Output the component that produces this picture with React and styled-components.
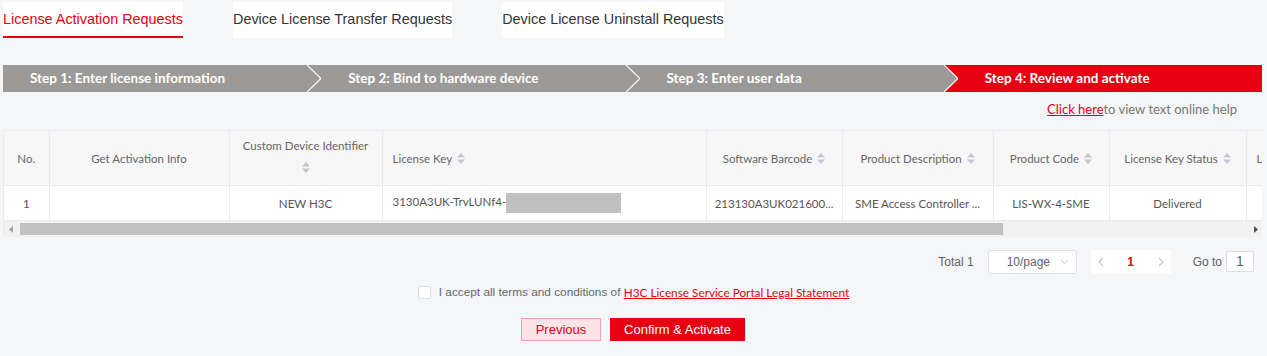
import React from 'react';
import styled, { createGlobalStyle } from 'styled-components';

const color = {
	red: '#e60012',
	page: '#f5f6f8',
	stepGrey: '#9b9a98',
	line: '#e9ebf2',
	head: '#f7f7f8',
	text: '#555',
	sub: '#666',
	sort: '#c4c7cd',
};

const GlobalStyle = createGlobalStyle`
	html, body {
		margin: 0;
		background: ${color.page};
		font-family: "Liberation Sans", Arial, sans-serif;
	}
`;

const Page = styled.div`
	width: 1267px;
	height: 356px;
	box-sizing: border-box;
	padding: 2px 5px 0 3px;
	overflow: hidden;
`;

const Tabs = styled.div`
	display: flex;
	gap: 50px;
	height: 36px;
`;

const Tab = styled.div`
	background: #fff;
	height: 34px;
	line-height: 34px;
	font-size: 14.4px;
	color: ${p => (p.$active ? color.red : '#333')};
	border-bottom: 2px solid ${p => (p.$active ? color.red : 'transparent')};
	white-space: nowrap;
`;

const Steps = styled.div`
	display: flex;
	height: 27px;
	margin-top: 27px;
`;

const Step = styled.div`
	flex: 1;
	background: ${p => (p.$active ? color.red : color.stepGrey)};
	color: #fff;
	font-family: Lato, "Noto Sans", sans-serif;
	font-weight: 700;
	font-size: 13.5px;
	line-height: 27px;
	padding-left: 27px;
	white-space: nowrap;
`;

const Sep = styled.svg`
	flex: none;
	display: block;
	background: ${p => p.$next};
`;

const Chevron = ({ prev, next }) => (
	<Sep width="14" height="27" viewBox="0 0 14 27" $next={next}>
		<polygon points="0,0 14,13.5 0,27" fill={prev} />
		<polyline points="0,0 14,13.5 0,27" fill="none" stroke="#fff" strokeWidth="1.2" />
	</Sep>
);

const Help = styled.div`
	text-align: right;
	padding-right: 25px;
	margin-top: 9px;
	font-family: Lato, "Noto Sans", sans-serif;
	font-size: 13px;
	color: #777;
	line-height: 16px;
	a {
		color: ${color.red};
		text-decoration: underline;
	}
`;

const TableWrap = styled.div`
	margin-top: 13px;
	width: 1259px;
	overflow: hidden;
	border-top: 1px solid ${color.line};
	border-left: 1px solid ${color.line};
	box-sizing: border-box;
	font-family: Lato, "Noto Sans", sans-serif;
	font-size: 11.5px;
`;

const Table = styled.table`
	border-collapse: collapse;
	table-layout: fixed;
	width: 1400px;
`;

const Th = styled.th`
	height: 54px;
	background: ${color.head};
	color: ${color.sub};
	font-weight: 400;
	text-align: ${p => p.$align || 'center'};
	padding: 0 ${p => (p.$align ? '10px' : '4px')};
	border-right: 1px solid ${color.line};
	border-bottom: 1px solid ${color.line};
	white-space: nowrap;
	overflow: hidden;
`;

const Td = styled.td`
	height: 34px;
	background: #fff;
	color: ${color.text};
	text-align: ${p => p.$align || 'center'};
	padding: 0 ${p => (p.$align ? '10px' : '4px')};
	border-right: 1px solid ${color.line};
	white-space: nowrap;
	overflow: hidden;
`;

const SortIcon = styled.svg`
	display: inline-block;
	vertical-align: middle;
	margin-left: ${p => (p.$below ? '0' : '5px')};
	margin-top: ${p => (p.$below ? '8px' : '-2px')};
`;

const Sort = ({ below }) => (
	<SortIcon width="8" height="11" viewBox="0 0 8 11" $below={below}>
		<polygon points="4,0 8,4.5 0,4.5" fill={color.sort} />
		<polygon points="0,6.5 8,6.5 4,11" fill={color.sort} />
	</SortIcon>
);

const Stacked = styled.div`
	display: flex;
	flex-direction: column;
	align-items: center;
	line-height: 16px;
	margin-top: -6px;
`;

const Redacted = styled.span`
	display: inline-block;
	width: 115px;
	height: 20px;
	background: #c0c0c0;
	vertical-align: middle;
`;

const Scrollbar = styled.div`
	display: flex;
	align-items: center;
	height: 16px;
	background: #f1f1f1;
	border-top: 1px solid ${color.line};
`;

const Arrow = styled.svg`
	flex: none;
	display: block;
	margin: 0 ${p => (p.$right ? '4px' : '5px')} 0 ${p => (p.$right ? 'auto' : '5px')};
`;

const Thumb = styled.div`
	width: 983px;
	height: 12px;
	background: #c1c1c1;
	margin-left: 2px;
`;

const Pager = styled.div`
	display: flex;
	align-items: center;
	justify-content: flex-end;
	padding-right: 8px;
	margin-top: 12px;
	height: 25px;
	font-size: 12px;
	color: #606266;
`;

const Total = styled.span`
	margin-right: 14px;
`;

const SizeSelect = styled.div`
	width: 89px;
	height: 24px;
	box-sizing: border-box;
	border: 1px solid #dcdfe6;
	border-radius: 3px;
	background: #fff;
	display: flex;
	align-items: center;
	padding: 0 7px 0 18px;
	color: #606266;
	justify-content: space-between;
`;

const PageBox = styled.div`
	margin-left: 14px;
	width: 80px;
	height: 24px;
	background: #fff;
	display: flex;
	align-items: center;
	justify-content: space-between;
	padding: 0 7px;
	box-sizing: border-box;
`;

const Current = styled.span`
	color: ${color.red};
	font-weight: 700;
	font-size: 12px;
`;

const GoTo = styled.span`
	margin-left: 22px;
	margin-right: 4px;
`;

const GoInput = styled.div`
	width: 28px;
	height: 21px;
	box-sizing: border-box;
	border: 1px solid #dcdfe6;
	background: #fff;
	font-size: 14px;
	color: #606266;
	text-align: center;
	line-height: 19px;
`;

const Terms = styled.div`
	display: flex;
	align-items: center;
	justify-content: center;
	margin-top: 10px;
	padding-left: 2px;
	font-size: 11.8px;
	color: ${color.sub};
	height: 16px;
	a {
		font-family: Lato, "Noto Sans", sans-serif;
		color: ${color.red};
		text-decoration: underline;
	}
`;

const Box = styled.span`
	width: 11px;
	height: 11px;
	border: 1px solid #dcdfe6;
	border-radius: 2px;
	background: #fff;
	margin-right: 8px;
`;

const Actions = styled.div`
	display: flex;
	justify-content: center;
	gap: 9px;
	margin-top: 18px;
	padding-left: 1px;
`;

const Button = styled.button`
	height: 23px;
	padding: 0;
	white-space: nowrap;
	font-family: "Liberation Sans", Arial, sans-serif;
	font-size: 13px;
	border: 1px solid ${p => (p.$primary ? color.red : '#f3a0a8')};
	background: ${p => (p.$primary ? color.red : '#fde5e7')};
	color: ${p => (p.$primary ? '#fff' : color.red)};
	border-radius: 0;
	width: ${p => (p.$primary ? '135px' : '80px')};
`;

const cols = [45, 180, 153, 324, 136, 151, 116, 137, 158];

export default function App() {
	const steps = [
		'Step 1: Enter license information',
		'Step 2: Bind to hardware device',
		'Step 3: Enter user data',
		'Step 4: Review and activate',
	];
	return (
		<Page>
			<GlobalStyle />
			<Tabs>
				<Tab $active>License Activation Requests</Tab>
				<Tab>Device License Transfer Requests</Tab>
				<Tab>Device License Uninstall Requests</Tab>
			</Tabs>

			<Steps>
				{steps.map((s, i) => (
					<React.Fragment key={s}>
						{i > 0 && (
							<Chevron prev={color.stepGrey} next={i === 3 ? color.red : color.stepGrey} />
						)}
						<Step $active={i === 3}>{s}</Step>
					</React.Fragment>
				))}
			</Steps>

			<Help>
				<a>Click here</a>to view text online help
			</Help>

			<TableWrap>
				<Table>
					<colgroup>
						{cols.map((w, i) => <col key={i} style={{ width: w }} />)}
					</colgroup>
					<thead>
						<tr>
							<Th>No.</Th>
							<Th>Get Activation Info</Th>
							<Th>
								<Stacked>
									Custom Device Identifier
									<Sort below />
								</Stacked>
							</Th>
							<Th $align="left">License Key<Sort /></Th>
							<Th>Software Barcode<Sort /></Th>
							<Th>Product Description<Sort /></Th>
							<Th>Product Code<Sort /></Th>
							<Th>License Key Status<Sort /></Th>
							<Th $align="left">License Expiration</Th>
						</tr>
					</thead>
					<tbody>
						<tr>
							<Td>1</Td>
							<Td></Td>
							<Td>NEW H3C</Td>
							<Td $align="left">3130A3UK-TrvLUNf4-<Redacted /></Td>
							<Td>213130A3UK021600...</Td>
							<Td>SME Access Controller ...</Td>
							<Td>LIS-WX-4-SME</Td>
							<Td>Delivered</Td>
							<Td></Td>
						</tr>
					</tbody>
				</Table>
				<Scrollbar>
					<Arrow width="4" height="7" viewBox="0 0 4 7">
						<polygon points="4,0 0,3.5 4,7" fill="#a3a3a3" />
					</Arrow>
					<Thumb />
					<Arrow $right width="4" height="7" viewBox="0 0 4 7">
						<polygon points="0,0 4,3.5 0,7" fill="#505050" />
					</Arrow>
				</Scrollbar>
			</TableWrap>

			<Pager>
				<Total>Total 1</Total>
				<SizeSelect>
					<span>10/page</span>
					<svg width="9" height="6" viewBox="0 0 9 6">
						<polyline points="1,1 4.5,4.5 8,1" fill="none" stroke="#c0c4cc" strokeWidth="1" />
					</svg>
				</SizeSelect>
				<PageBox>
					<svg width="6" height="10" viewBox="0 0 6 10">
						<polyline points="5,1 1,5 5,9" fill="none" stroke="#c0c4cc" strokeWidth="1.2" />
					</svg>
					<Current>1</Current>
					<svg width="6" height="10" viewBox="0 0 6 10">
						<polyline points="1,1 5,5 1,9" fill="none" stroke="#c0c4cc" strokeWidth="1.2" />
					</svg>
				</PageBox>
				<GoTo>Go to</GoTo>
				<GoInput>1</GoInput>
			</Pager>

			<Terms>
				<Box />
				I accept all terms and conditions of&nbsp;<a>H3C License Service Portal Legal Statement</a>
			</Terms>

			<Actions>
				<Button>Previous</Button>
				<Button $primary>Confirm &amp; Activate</Button>
			</Actions>
		</Page>
	);
}
